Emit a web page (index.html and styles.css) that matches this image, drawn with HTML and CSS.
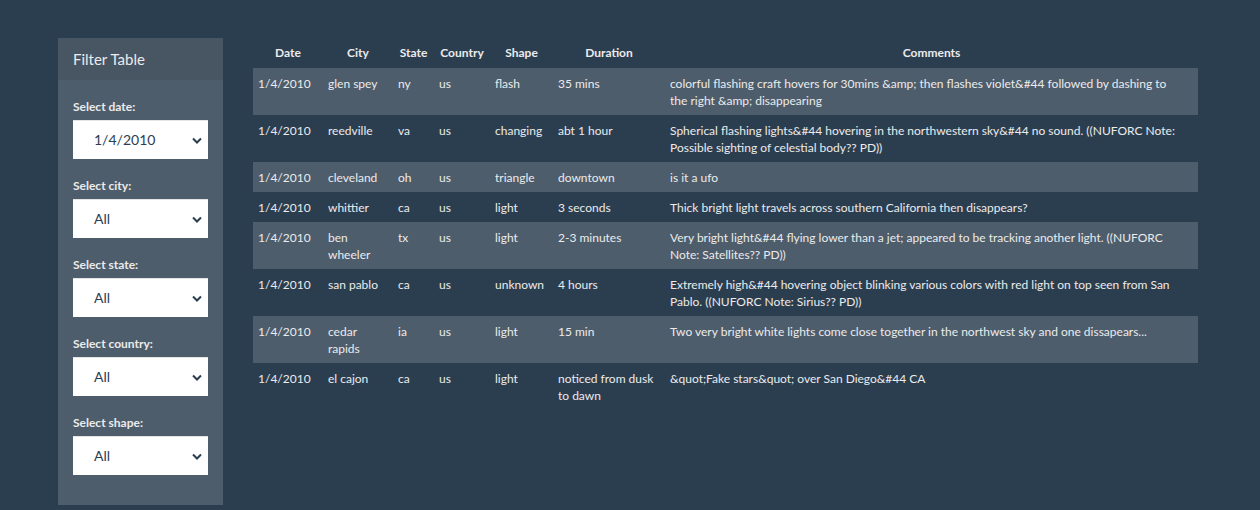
FILE: index.html
```html
<!DOCTYPE html>
<html>
<head>
<meta charset="utf-8">
<link rel="stylesheet" href="styles.css">
</head>
<body>
<div class="page">
  <aside class="panel">
    <div class="panel-head">Filter Table</div>
    <div class="panel-body">
      <div class="field">
        <div class="label">Select date:</div>
        <div class="select"><span>1/4/2010</span><svg class="chev" width="10" height="7" viewBox="0 0 10 7"><path d="M1 1.5 L5 5.5 L9 1.5" fill="none" stroke="#2b3e50" stroke-width="2"/></svg></div>
      </div>
      <div class="field">
        <div class="label">Select city:</div>
        <div class="select"><span>All</span><svg class="chev" width="10" height="7" viewBox="0 0 10 7"><path d="M1 1.5 L5 5.5 L9 1.5" fill="none" stroke="#2b3e50" stroke-width="2"/></svg></div>
      </div>
      <div class="field">
        <div class="label">Select state:</div>
        <div class="select"><span>All</span><svg class="chev" width="10" height="7" viewBox="0 0 10 7"><path d="M1 1.5 L5 5.5 L9 1.5" fill="none" stroke="#2b3e50" stroke-width="2"/></svg></div>
      </div>
      <div class="field">
        <div class="label">Select country:</div>
        <div class="select"><span>All</span><svg class="chev" width="10" height="7" viewBox="0 0 10 7"><path d="M1 1.5 L5 5.5 L9 1.5" fill="none" stroke="#2b3e50" stroke-width="2"/></svg></div>
      </div>
      <div class="field">
        <div class="label">Select shape:</div>
        <div class="select"><span>All</span><svg class="chev" width="10" height="7" viewBox="0 0 10 7"><path d="M1 1.5 L5 5.5 L9 1.5" fill="none" stroke="#2b3e50" stroke-width="2"/></svg></div>
      </div>
    </div>
  </aside>
  <main class="main">
    <table class="data">
      <colgroup>
        <col class="c-date"><col class="c-city"><col class="c-state"><col class="c-country"><col class="c-shape"><col class="c-dur"><col class="c-com">
      </colgroup>
      <thead>
        <tr><th>Date</th><th>City</th><th>State</th><th>Country</th><th>Shape</th><th>Duration</th><th>Comments</th></tr>
      </thead>
      <tbody>
        <tr><td>1/4/2010</td><td>glen spey</td><td>ny</td><td>us</td><td>flash</td><td>35 mins</td><td class="com">colorful flashing craft hovers for 30mins &amp;amp; then flashes violet&amp;#44 followed by dashing to the right &amp;amp; disappearing</td></tr>
        <tr><td>1/4/2010</td><td>reedville</td><td>va</td><td>us</td><td>changing</td><td>abt 1 hour</td><td class="com">Spherical flashing lights&amp;#44 hovering in the northwestern sky&amp;#44 no sound. ((NUFORC Note: Possible sighting of celestial body?? PD))</td></tr>
        <tr><td>1/4/2010</td><td>cleveland</td><td>oh</td><td>us</td><td>triangle</td><td>downtown</td><td class="com">is it a ufo</td></tr>
        <tr><td>1/4/2010</td><td>whittier</td><td>ca</td><td>us</td><td>light</td><td>3 seconds</td><td class="com">Thick bright light travels across southern California then disappears?</td></tr>
        <tr><td>1/4/2010</td><td>ben wheeler</td><td>tx</td><td>us</td><td>light</td><td>2-3 minutes</td><td class="com">Very bright light&amp;#44 flying lower than a jet; appeared to be tracking another light. ((NUFORC Note: Satellites?? PD))</td></tr>
        <tr><td>1/4/2010</td><td>san pablo</td><td>ca</td><td>us</td><td>unknown</td><td>4 hours</td><td class="com">Extremely high&amp;#44 hovering object blinking various colors with red light on top seen from San Pablo. ((NUFORC Note: Sirius?? PD))</td></tr>
        <tr><td>1/4/2010</td><td>cedar rapids</td><td>ia</td><td>us</td><td>light</td><td>15 min</td><td class="com">Two very bright white lights come close together in the northwest sky and one dissapears...<br>&nbsp;</td></tr>
        <tr><td>1/4/2010</td><td>el cajon</td><td>ca</td><td>us</td><td>light</td><td>noticed from dusk to dawn</td><td class="com">&amp;quot;Fake stars&amp;quot; over San Diego&amp;#44 CA</td></tr>
      </tbody>
    </table>
  </main>
</div>
</body>
</html>
```
FILE: styles.css
```css
html, body {
  margin: 0;
  padding: 0;
  background: #2b3e50;
}
body {
  font-family: "Lato", "Noto Sans", sans-serif;
  color: #ebebeb;
  font-size: 12px;
  line-height: 17px;
}
.page {
  display: flex;
  align-items: flex-start;
  padding: 38px 0 0 58px;
  gap: 30px;
  height: 472px;
}
.panel {
  width: 165px;
  background: #4e5d6c;
  height: 467px;
  flex: none;
}
.panel-head {
  height: 42px;
  background: #485563;
  padding-left: 15px;
  display: flex;
  align-items: center;
  font-size: 15px;
  color: #ebebeb;
}
.panel-body {
  padding: 18px 15px 0 15px;
  display: flex;
  flex-direction: column;
  gap: 18px;
}
.field {
  display: flex;
  flex-direction: column;
  gap: 5px;
}
.label {
  font-weight: bold;
  font-size: 12px;
  line-height: 17px;
  height: 17px;
}
.select {
  position: relative;
  width: 135px;
  height: 39px;
  box-sizing: border-box;
  background: #fff;
  border-top: 1px solid #e4e4e4;
  display: flex;
  align-items: center;
  padding-left: 21px;
  padding-bottom: 2px;
  font-size: 14px;
  color: #2b3e50;
}
.chev {
  position: absolute;
  right: 6px;
  top: 16px;
}
.main {
  width: 945px;
  flex: none;
}
.data {
  width: 945px;
  border-collapse: collapse;
  table-layout: fixed;
}
.c-date { width: 70px; }
.c-city { width: 70px; }
.c-state { width: 41px; }
.c-country { width: 56px; }
.c-shape { width: 63px; }
.c-dur { width: 112px; }
.c-com { width: 533px; }
.data th {
  font-weight: bold;
  text-align: center;
  padding: 6px 0 7px;
  white-space: nowrap;
}
.data td {
  padding: 7px 5px 6px;
  vertical-align: top;
}
.data td.com {
  padding-right: 15px;
}
.data tbody tr:nth-child(odd) {
  background: #4e5d6c;
}
```
